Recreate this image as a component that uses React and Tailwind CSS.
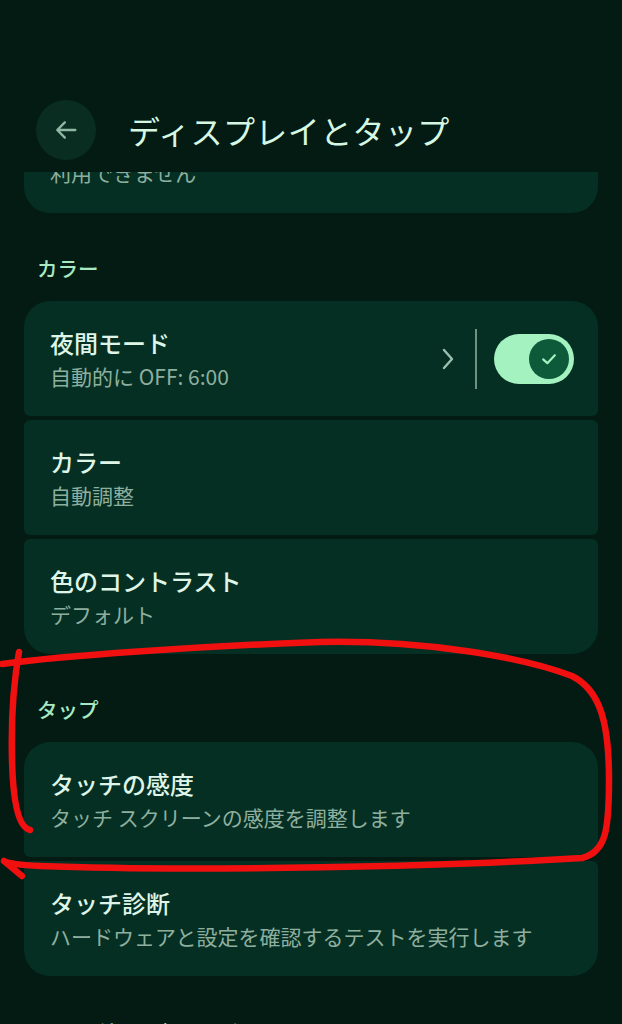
import React from 'react';

const font = { fontFamily: '"Noto Sans CJK JP", "Noto Sans", sans-serif' };

function Item({ title, subtitle, shape, children }) {
  return (
    <div className={`h-[115px] bg-[#052f23] flex items-center pl-[26px] pr-[24px] ${shape}`}>
      <div className="flex-1 flex flex-col">
        <div className="text-[24px] leading-[32px] font-medium text-[#dff5e8]">{title}</div>
        <div className="text-[21px] leading-[30px] mt-[2px] text-[#8eaf9f]">{subtitle}</div>
      </div>
      {children}
    </div>
  );
}

function SectionHeader({ label }) {
  return (
    <div className="pl-[37px] pt-[41px] pb-[19px] text-[20.5px] leading-[28px] font-medium text-[#a9e9c2]">
      {label}
    </div>
  );
}

function Toggle() {
  return (
    <div className="flex items-center">
      <svg width="14" height="24" viewBox="0 0 14 24" className="mr-[20px]">
        <path d="M3 3 L11 12 L3 21" fill="none" stroke="#9dbfae" strokeWidth="2.4" strokeLinecap="round" strokeLinejoin="round" />
      </svg>
      <div className="w-[2px] h-[60px] bg-[#6f9383] mr-[17px]" />
      <div className="w-[80px] h-[50px] rounded-full bg-[#a4f2c0] flex items-center justify-end pr-[5px]">
        <div className="w-[40px] h-[40px] rounded-full bg-[#0d5a3b] flex items-center justify-center">
          <svg width="20" height="20" viewBox="0 0 24 24">
            <path d="M5 12.5 L10 17 L19 7.5" fill="none" stroke="#a4f2c0" strokeWidth="2.6" strokeLinecap="round" strokeLinejoin="round" />
          </svg>
        </div>
      </div>
    </div>
  );
}

export default function App() {
  return (
    <div className="relative w-full h-[1024px] overflow-hidden bg-[#031b13]" style={font}>
      {/* header */}
      <div className="h-[172px] pt-[100px] pl-[36px] flex items-start gap-[32px] bg-[#031b13]">
        <div className="w-[60px] h-[60px] rounded-full bg-[#0a2d21] flex items-center justify-center">
          <svg width="28" height="28" viewBox="0 0 24 24">
            <path d="M20 12 H5 M11 5.5 L4.5 12 L11 18.5" fill="none" stroke="#8fb8a4" strokeWidth="2" strokeLinecap="round" strokeLinejoin="round" />
          </svg>
        </div>
        <div className="h-[60px] flex items-center text-[32px] text-[#d6f7e3] tracking-[0.4px]">ディスプレイとタップ</div>
      </div>

      {/* scrolled-away card */}
      <div className="mx-[24px] h-[41px] rounded-b-[26px] bg-[#052f23] overflow-hidden pl-[26px]">
        <div className="-mt-[15px] text-[21px] leading-[30px] text-[#8eaf9f]">利用できません</div>
      </div>

      <SectionHeader label="カラー" />
      <div className="mx-[24px] flex flex-col gap-[4px]">
        <Item title="夜間モード" subtitle="自動的に OFF: 6:00" shape="rounded-t-[26px] rounded-b-[6px]">
          <Toggle />
        </Item>
        <Item title="カラー" subtitle="自動調整" shape="rounded-[6px]" />
        <Item title="色のコントラスト" subtitle="デフォルト" shape="rounded-t-[6px] rounded-b-[26px]" />
      </div>

      <SectionHeader label="タップ" />
      <div className="mx-[24px] flex flex-col gap-[4px]">
        <Item title="タッチの感度" subtitle="タッチ スクリーンの感度を調整します" shape="rounded-t-[26px] rounded-b-[6px]" />
        <Item title="タッチ診断" subtitle="ハードウェアと設定を確認するテストを実行します" shape="rounded-t-[6px] rounded-b-[26px]" />
      </div>

      <div className="pl-[48px] pt-[42px] text-[24px] leading-[32px] font-medium text-[#dff5e8]">
        その他のディスプレイ コントロール
      </div>

      {/* red annotation */}
      <svg className="absolute left-0 top-0 pointer-events-none" width="622" height="1024" viewBox="0 0 622 1024">
        <g fill="none" stroke="#f01010" strokeWidth="6.5" strokeLinecap="round" strokeLinejoin="round">
          <path d="M30 830 C 18 827, 13 800, 12 760 C 11 720, 14 680, 19 652" />
          <path d="M2 664 C 60 656, 200 646, 320 642 C 420 640, 520 656, 572 676 C 600 690, 609 722, 609 780 C 609 830, 606 852, 582 858 C 450 866, 200 872, 40 866 C 20 865, 9 864, 4 861 L 22 876" />
        </g>
      </svg>
    </div>
  );
}
